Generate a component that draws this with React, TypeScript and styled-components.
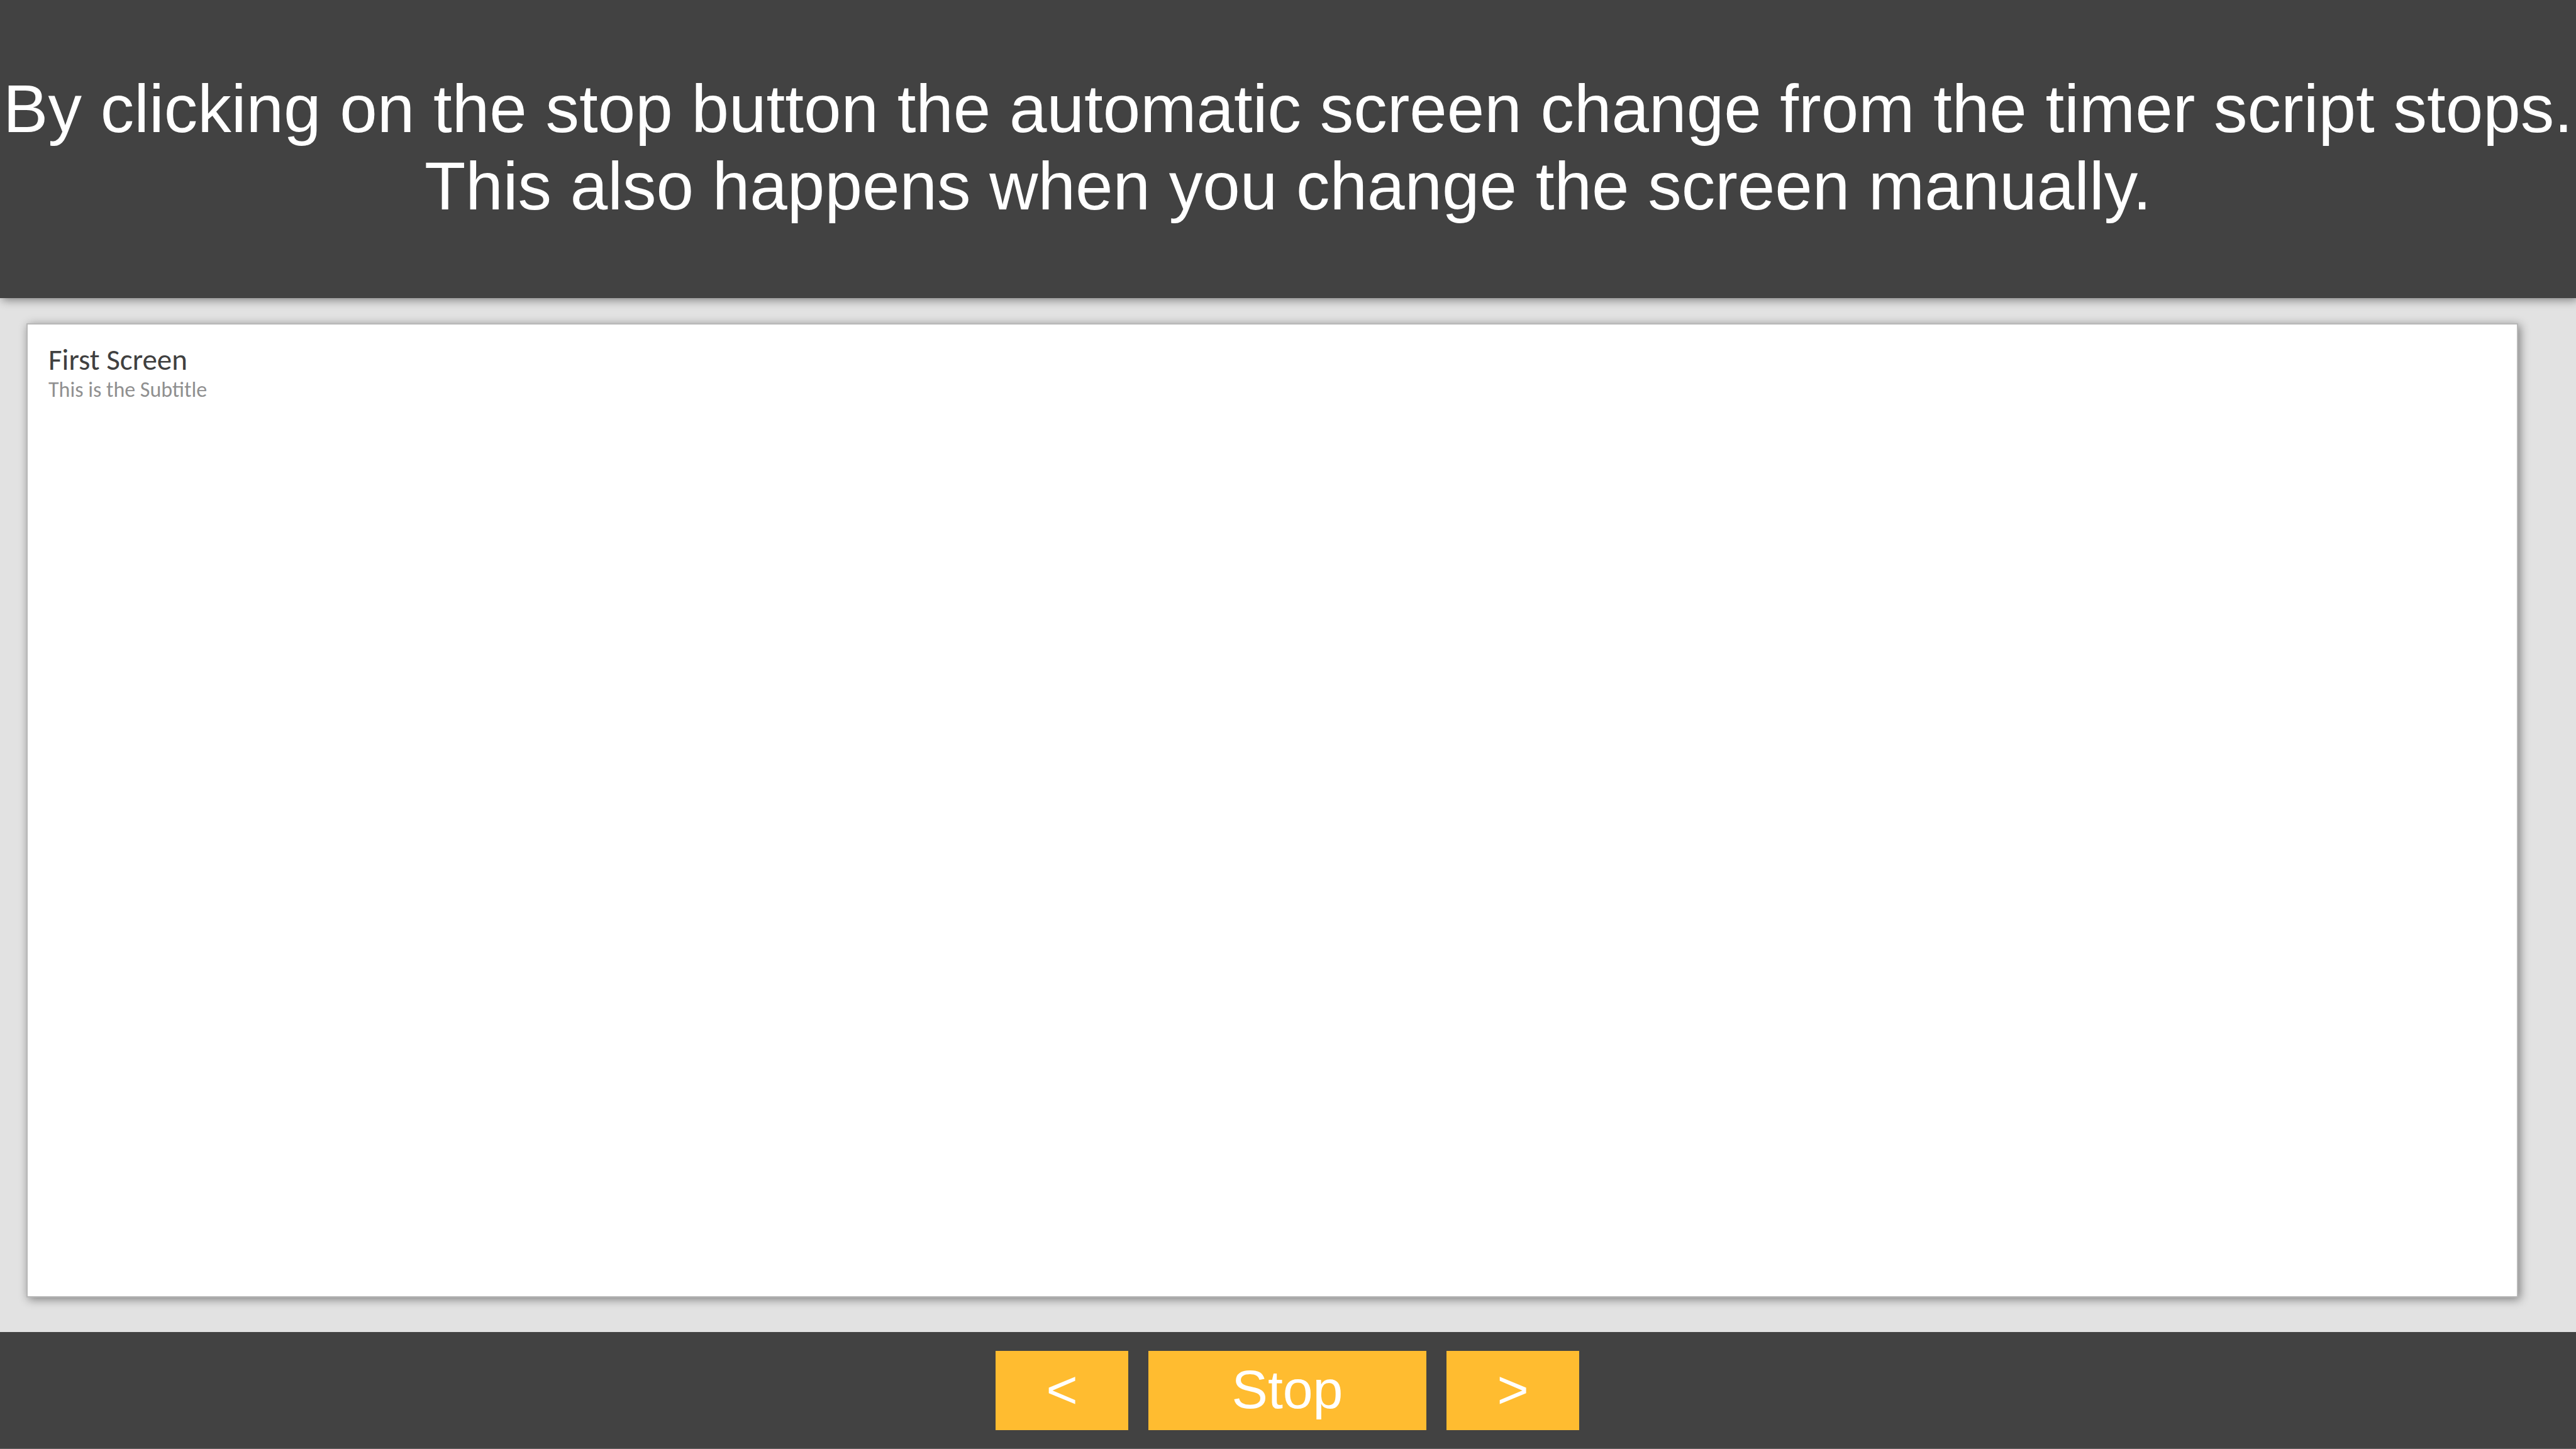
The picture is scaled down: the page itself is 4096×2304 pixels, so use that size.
import React from "react";
import styled, { createGlobalStyle } from "styled-components";

const Global = createGlobalStyle`
  * { box-sizing: border-box; }
  body { margin: 0; background: #e2e2e2; font-family: "Liberation Sans", Arial, sans-serif; }
`;

const Page = styled.div`
  min-height: 100vh;
  display: flex;
  flex-direction: column;
`;

const Header = styled.header`
  padding: 112px 0 116px;
  background: #424242;
  color: #fff;
  text-align: center;
  font-size: 107px;
  line-height: 123px;
  box-shadow: 3px 3px 14px rgba(0, 0, 0, 0.45);
`;

const Message = styled.p`
  margin: 0;
`;

const Main = styled.main`
  flex: 1;
  display: flex;
  padding: 40px 92px 55px 42px;
`;

const Card = styled.section`
  flex: 1;
  padding: 29px 33px;
  border: 2px solid #b8b8b8;
  background: #fff;
  box-shadow: 3px 3px 14px rgba(0, 0, 0, 0.45);
  font-family: Calibri, Carlito, Lato, sans-serif;
`;

const Title = styled.h1`
  margin: 0;
  color: #404040;
  font-size: 47px;
  font-weight: 400;
  line-height: 54px;
`;

const Subtitle = styled.p`
  margin: 0;
  color: #909090;
  font-size: 34px;
  line-height: 42px;
`;

const Footer = styled.footer`
  display: flex;
  justify-content: center;
  gap: 32px;
  padding: 30px 2px 29px 0;
  border-bottom: 1px solid #646464;
  background: #424242;
`;

const NavButton = styled.button<{ $wide?: boolean }>`
  width: ${(p) => (p.$wide ? 442 : 211)}px;
  height: 126px;
  padding: 0 0 4px;
  border: 0;
  background: #ffbc30;
  color: #fff;
  font: 86px/100px "Liberation Sans", Arial, sans-serif;
`;

export default function App() {
  return (
    <Page>
      <Global />
      <Header>
        <Message>By clicking on the stop button the automatic screen change from the timer script stops.</Message>
        <Message>This also happens when you change the screen manually.</Message>
      </Header>
      <Main>
        <Card>
          <Title>First Screen</Title>
          <Subtitle>This is the Subtitle</Subtitle>
        </Card>
      </Main>
      <Footer>
        <NavButton>&lt;</NavButton>
        <NavButton $wide>Stop</NavButton>
        <NavButton>&gt;</NavButton>
      </Footer>
    </Page>
  );
}
